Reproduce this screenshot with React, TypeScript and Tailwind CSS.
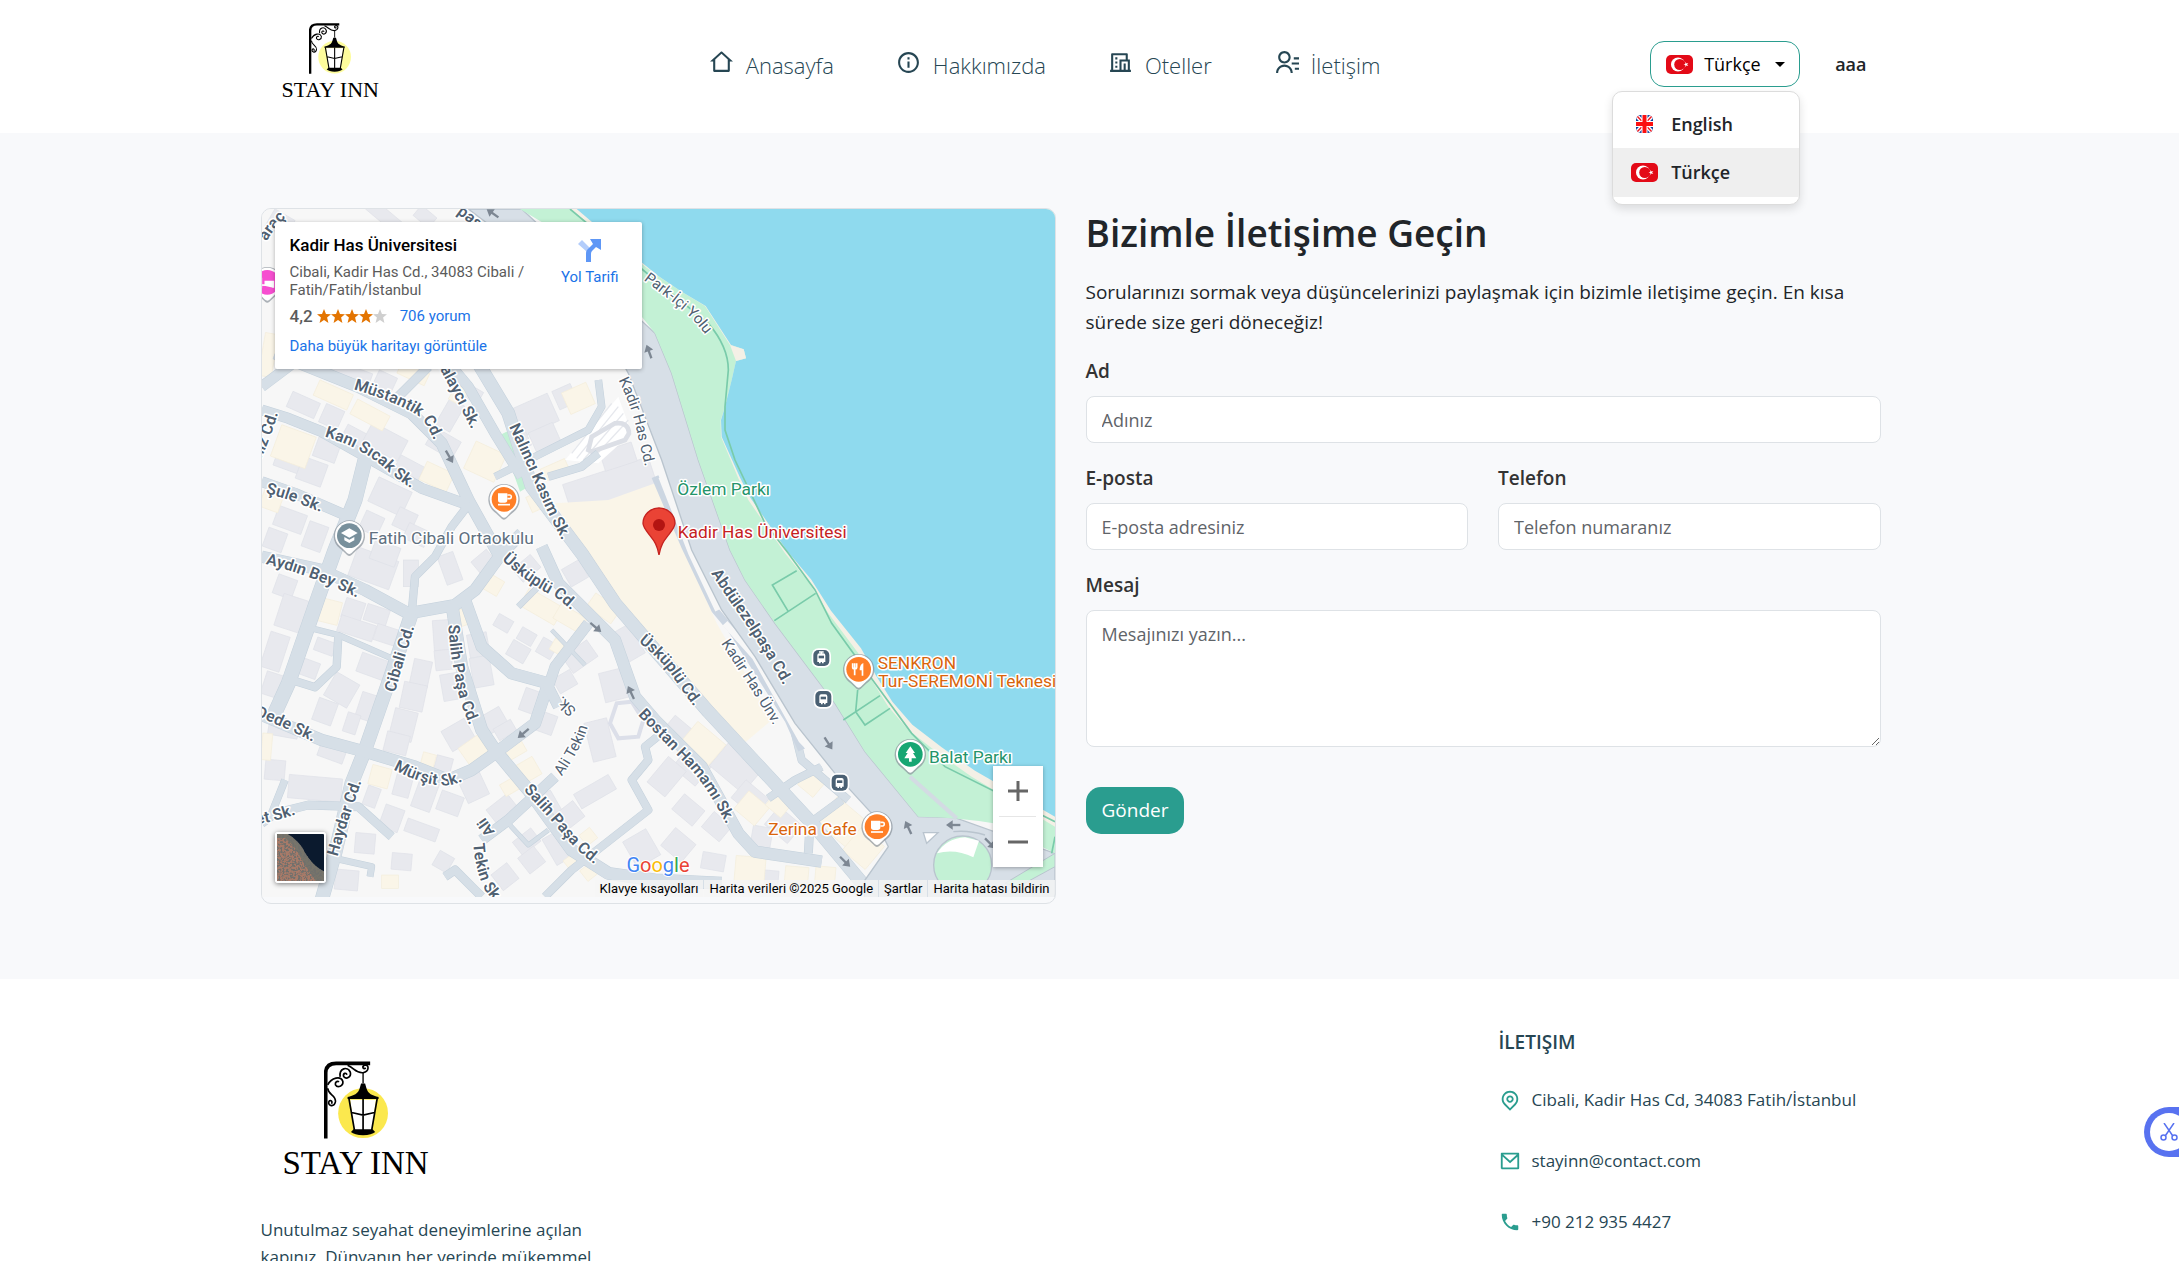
import React from "react";
import {
  RiHome2Line,
  RiInformationLine,
  RiHotelLine,
  RiContactsLine,
  RiMapPinLine,
  RiMailLine,
} from "react-icons/ri";
import { MdPhone } from "react-icons/md";

/* ---------- Brand ---------- */

function Lamp({ className, glow }: { className: string; glow: string }) {
  return (
    <svg viewBox="0 0 190 230" className={className} fill="none" aria-hidden="true">
      <circle cx="116" cy="154" r="74" fill={glow} />
      <path d="M5 229V34Q6 6 36 6H137" stroke="#000" strokeWidth="11" />
      <path
        d="M11 70C22 48 50 42 56 60C58 74 40 80 34 70C32 62 40 56 44 62M48 46C44 20 70 14 78 32C82 48 64 56 58 44C56 36 66 32 68 40M70 12C90 20 94 36 116 34C136 30 134 8 120 12C112 16 116 26 124 20M11 80C12 100 36 100 34 120C30 138 12 132 14 122C16 112 28 118 22 126"
        stroke="#000"
        strokeWidth="5"
      />
      <path d="M116 34V66" stroke="#000" strokeWidth="4" />
      <path d="M110 66h12l4 14c4 16 18 22 36 26v6H70v-6c18-4 32-10 36-26z" fill="#000" />
      <path d="M78 114h76l-12 92H90z" fill="#fff" />
      <path d="M74 110l17 98M158 110l-17 98M116 110v98M82 152l34 8 34-8" stroke="#000" strokeWidth="5" />
      <path d="M88 202h56l8 8q-10 8-36 10q-26-2-36-10z" fill="#000" />
    </svg>
  );
}

/* ---------- Flags ---------- */

function TurkishFlag() {
  return (
    <svg viewBox="0 0 27 19" className="h-[19px] w-[27px] shrink-0" aria-hidden="true">
      <rect width="27" height="19" rx="5" fill="#e30a17" />
      <circle cx="12" cy="9.5" r="7" fill="#fff" />
      <circle cx="13.800" cy="9.500" r="5.600" fill="#e30a17" />
      <path d="M17.500 9.500l4.800-1.600-3 4.100v-5l3 4.100z" fill="#fff" />
    </svg>
  );
}

function BritishFlag() {
  return (
    <svg viewBox="0 0 17 18" className="h-[18px] w-[17px] shrink-0" aria-hidden="true">
      <clipPath id="gb">
        <rect width="17" height="18" rx="5" />
      </clipPath>
      <g clipPath="url(#gb)">
        <rect width="17" height="18" fill="#0b3d9c" />
        <path d="M0 0l17 18M17 0L0 18" stroke="#fff" strokeWidth="4" />
        <path d="M0 0l17 18M17 0L0 18" stroke="#f01c24" strokeWidth="1.500" />
        <path d="M8.500 0v18M0 9h17" stroke="#fff" strokeWidth="6" />
        <path d="M8.500 0v18M0 9h17" stroke="#fb1010" strokeWidth="4" />
      </g>
    </svg>
  );
}

/* ---------- Header ---------- */

const NAV = [
  { label: "Anasayfa", Icon: RiHome2Line },
  { label: "Hakkımızda", Icon: RiInformationLine },
  { label: "Oteller", Icon: RiHotelLine },
  { label: "İletişim", Icon: RiContactsLine },
];

function Header() {
  return (
    <header className="relative z-10 bg-white pr-[38px]">
      <div className="mx-auto flex h-[133px] max-w-[1620px] items-center justify-between">
        <a href="#" className="mr-[60px] flex flex-col items-center pb-2 pl-[21px]">
          <Lamp className="h-[51px] w-[42px]" glow="#fdfc9c" />
          <span className="mt-1 font-['Liberation_Serif',serif] text-[22px] leading-6 text-black">STAY INN</span>
        </a>
        <nav className="flex gap-[62px] pb-1">
          {NAV.map(({ label, Icon }) => (
            <a key={label} href="#" className="flex items-center gap-3 text-[#264653]">
              <Icon className="mb-1 size-[25px]" />
              <span className="font-['Open_Sans',sans-serif] text-[22px] leading-8 font-light">{label}</span>
            </a>
          ))}
        </nav>
        <div className="flex items-center gap-[35px] pr-[14px] pb-[5px]">
          <div className="relative">
            <button
              type="button"
              className="flex h-[46px] w-[150px] items-center rounded-[14px] border border-[#2a9d8f] bg-white pl-[15px] text-[18px] text-black"
            >
              <TurkishFlag />
              <span className="ml-[11px]">Türkçe</span>
              <svg viewBox="0 0 10 5" className="ml-[14px] h-[5px] w-[10px]" aria-hidden="true">
                <path d="M0 0h10L5 5z" fill="#000" />
              </svg>
            </button>
            <ul className="absolute top-full right-0 mt-[4px] w-[188px] rounded-[10px] border border-[#dcdcdc] bg-white pt-2 pb-[7px] text-[18px] font-semibold text-[#212529] shadow-[0_4px_10px_rgba(0,0,0,0.12)]">
              <li>
                <button type="button" className="flex h-12 w-full items-center pl-[18px]">
                  <span className="flex w-[27px] justify-center">
                    <BritishFlag />
                  </span>
                  <span className="ml-[13px]">English</span>
                </button>
              </li>
              <li>
                <button type="button" className="flex h-[49px] w-full items-center bg-[#efefef] pl-[18px]">
                  <TurkishFlag />
                  <span className="ml-[13px]">Türkçe</span>
                </button>
              </li>
            </ul>
          </div>
          <a href="#" className="text-[18px] font-semibold text-[#212529]">
            aaa
          </a>
        </div>
      </div>
    </header>
  );
}

/* ---------- Map ---------- */

// Minor streets: [path, width]
const STREETS: [string, number][] = [
  ["M640 440L760 640L830 860L980 1060L1080 1210L1200 1350L1360 1535L1680 1880L1830 2060", 38],
  ["M540 440L640 560L720 700L800 830", 30],
  ["M60 460L310 560L470 640L560 730L640 900L740 1080", 34],
  ["M20 630L100 655L200 695L350 780L500 865L640 915", 30],
  ["M20 560L140 470", 30],
  ["M420 600L520 500", 26],
  ["M330 780L300 900L240 1050L190 1190L100 1450L50 1560", 42],
  ["M20 845L120 880L270 945", 30],
  ["M20 1070L200 1110L330 1170L460 1240L600 1215L660 1170L740 1060L800 1000", 34],
  ["M470 1240L410 1420L330 1650L290 1750L240 1960L200 2100", 40],
  ["M470 1240L480 1130L540 1070L590 980L640 915", 22],
  ["M590 1210L620 1400L680 1590L720 1650L820 1770L950 1950L1060 2020L1200 2040L1400 2050", 36],
  ["M630 1200L680 1340L770 1420L880 1450L840 1570L720 1660L650 1710L580 1740L480 1700L330 1655L200 1620L20 1545", 34],
  ["M860 1040L910 1150L1000 1240L1080 1320L1140 1490L1200 1560L1340 1700L1450 1900L1500 1955L1700 1985", 34],
  ["M1000 1270L900 1400L880 1460L910 1520", 30],
  ["M170 1285L250 1305L410 1375", 16],
  ["M250 1305L245 1400L180 1462L110 1440", 22],
  ["M20 1870L60 1840L160 1815L310 1820L410 1910", 24],
  ["M90 1740L50 1840", 20],
  ["M680 1920L760 1860L900 1730", 30],
  ["M760 1870L820 1935L880 1890", 12],
  ["M240 1975L350 2000L345 2030", 18],
  ["M570 2030L600 2010L680 2090", 24],
  ["M870 2090L950 2010L1180 1830L1130 1740L1180 1680L1170 1640L1220 1600", 22],
  ["M720 830L900 740L1000 690L1040 620L1030 540", 20],
  ["M880 830L980 800L1030 760", 22],
  ["M1540 1795L1620 1740L1700 1700M1620 1600L1640 1680L1780 1800", 22],
  ["M1660 1960L1665 1870L1760 1800", 24],
  ["M790 1220L860 1150", 16],
  ["M890 1290L990 1395", 10],
];

// Building footprints: [x, y, width, height, rotation]
const BUILDINGS: [number, number, number, number, number][] = [
  [100, 590, 90, 50, 24], [200, 620, 60, 60, 24], [40, 40, 70, 60, 30], [330, 30, 120, 40, 40], [480, 30, 60, 40, 40],
  [260, 690, 90, 60, 28], [330, 690, 120, 70, 28], [420, 780, 80, 60, 28], [230, 500, 120, 40, 20], [360, 520, 60, 50, 25],
  [620, 560, 60, 40, 30], [560, 600, 50, 90, 30], [520, 700, 90, 60, 30], [180, 720, 70, 60, 20], [60, 760, 80, 50, 20],
  [350, 850, 110, 80, 25], [320, 940, 60, 60, 25], [420, 930, 60, 60, 25], [130, 780, 80, 70, 20], [60, 930, 90, 60, 20],
  [150, 970, 60, 80, 20], [30, 990, 60, 60, 20], [450, 980, 70, 50, 25], [780, 600, 120, 90, -24], [830, 680, 80, 70, -24],
  [760, 690, 60, 60, -24], [930, 810, 270, 90, -18], [1040, 740, 100, 60, -18], [900, 560, 60, 60, -24],
  [290, 1060, 130, 90, 20], [445, 1080, 45, 80, 0], [350, 1030, 80, 60, 20], [560, 1060, 50, 90, -20],
  [60, 1130, 60, 60, 20], [70, 1190, 80, 100, 18], [30, 1300, 60, 110, 18], [25, 1420, 60, 70, 18],
  [265, 1200, 60, 60, 18], [330, 1220, 70, 50, 18], [250, 1260, 110, 50, 18], [360, 1280, 70, 50, 18], [180, 1320, 60, 40, 20],
  [130, 1380, 60, 50, 20], [310, 1370, 90, 60, 20], [220, 1430, 80, 80, 30], [180, 1500, 60, 70, 20], [310, 1480, 50, 80, 18],
  [270, 1540, 40, 60, 18], [470, 1380, 55, 80, 12], [440, 1450, 70, 80, 12], [410, 1530, 70, 90, 14], [390, 1600, 70, 60, 14],
  [535, 1260, 60, 90, -4], [540, 1350, 50, 60, -6], [560, 1420, 60, 80, -10], [640, 1300, 60, 70, -10], [650, 1370, 60, 90, -10],
  [570, 1570, 80, 70, -30], [690, 1530, 60, 60, -30], [720, 1570, 60, 40, -30], [720, 1250, 50, 40, 30], [790, 1290, 50, 40, 30],
  [760, 1330, 60, 50, 30], [850, 1320, 50, 50, 30], [800, 1470, 60, 70, 20], [850, 1540, 50, 60, 20], [930, 1340, 90, 60, -35],
  [1090, 1280, 60, 100, -30], [1040, 1410, 80, 90, -14], [900, 1420, 60, 50, -30], [1000, 1560, 70, 120, -14], [960, 1750, 120, 50, -30],
  [1070, 1150, 50, 30, -10], [40, 1570, 90, 40, 10], [30, 1680, 60, 60, 5], [100, 1730, 160, 70, 5], [190, 1640, 80, 40, 20],
  [420, 1710, 50, 80, 15], [480, 1740, 60, 90, 20], [550, 1780, 70, 60, 20], [620, 1720, 70, 80, -25], [540, 1670, 50, 50, 15],
  [330, 1760, 40, 60, 20], [380, 1820, 60, 70, 20], [450, 1870, 100, 40, 20], [300, 1900, 60, 60, 5], [410, 1960, 60, 50, 5],
  [240, 2010, 70, 60, 5], [540, 1960, 50, 50, 30], [700, 1800, 80, 50, -38], [780, 1900, 70, 50, -38], [850, 1780, 60, 80, -30],
  [900, 1820, 80, 60, -38], [720, 2000, 60, 60, -38], [800, 1950, 60, 60, -38], [880, 1900, 50, 90, -30], [1120, 1900, 80, 90, -30],
  [1230, 1560, 70, 70, 40], [1270, 1650, 90, 90, 40], [1380, 1650, 130, 100, 40], [1200, 1680, 70, 100, 40], [1260, 1800, 80, 60, 40],
  [1350, 1850, 70, 60, 40], [1440, 1760, 90, 70, 40], [1230, 1900, 80, 70, 40], [1540, 1840, 90, 70, 40], [1340, 1960, 70, 50, 10],
  [1490, 2010, 80, 50, 5], [1490, 1880, 60, 60, 10], [930, 1090, 60, 60, -30], [780, 1080, 70, 50, -40], [660, 1060, 60, 60, -40],
];

const SHOPS: [number, number, number, number, number][] = [
  [180, 560, 110, 50, 24], [20, 400, 40, 130, 10], [290, 620, 110, 50, 28], [60, 690, 110, 100, 20], [500, 800, 90, 60, 25],
  [640, 740, 100, 90, 25], [590, 560, 40, 50, 30], [20, 870, 60, 60, 20], [930, 560, 80, 70, -24], [860, 790, 80, 40, -24],
  [820, 880, 50, 50, -24], [195, 1200, 60, 70, 14], [690, 1130, 50, 50, 30], [600, 1230, 30, 50, -20], [800, 1190, 120, 60, 30],
  [900, 1230, 90, 50, 30], [1000, 1200, 90, 50, 35], [890, 1320, 40, 40, 30], [620, 1620, 70, 60, -35], [750, 1630, 60, 40, -30],
  [790, 1680, 60, 60, -30], [740, 1740, 50, 40, -30], [500, 1660, 40, 40, 15], [345, 1700, 60, 60, 15], [20, 1600, 30, 80, 5],
  [980, 1890, 40, 40, -38], [930, 1960, 60, 40, -38], [980, 1990, 60, 40, -38], [380, 2025, 50, 40, 0], [1290, 1590, 110, 80, 40],
  [1450, 1790, 80, 70, 40], [1640, 1720, 60, 60, 40], [1700, 1820, 130, 100, 40], [1540, 1790, 60, 50, 40], [1780, 1900, 90, 90, 40],
  [1440, 1970, 90, 80, 5], [1590, 2000, 70, 50, 5], [1680, 2000, 60, 70, 5], [430, 500, 90, 40, 25],
];

// Street names set along their streets: [path, name]
const NAMES: [string, string][] = [
  ["M295 568Q440 610 500 655Q530 690 555 775", "Müstantik Cd."],
  ["M208 710Q330 745 400 815Q450 855 530 905", "Kanı Sıcak Sk."],
  ["M32 880Q120 900 250 960", "Şule Sk."],
  ["M32 1092Q190 1130 380 1230", "Aydın Bey Sk."],
  ["M0 1548Q90 1580 230 1655", "Dede Sk."],
  ["M5 1872Q70 1865 170 1825", "et Sk."],
  ["M540 480Q600 590 640 670Q670 720 720 820", "Kalaycı Sk."],
  ["M762 680Q800 760 840 850Q880 950 970 1110", "Nalıncı Kasım Sk."],
  ["M740 1080Q830 1160 900 1190Q940 1220 1000 1280", "Üsküplü Cd."],
  ["M1150 1325Q1230 1390 1260 1440Q1300 1500 1370 1590", "Üsküplü Cd."],
  ["M1148 1545Q1250 1650 1310 1710Q1380 1790 1460 1970", "Bostan Hamamı Sk."],
  ["M1368 1120L1425 1205Q1510 1320 1605 1490L1650 1580", "Abdülezelpaşa Cd."],
  ["M580 1275Q585 1370 610 1480Q630 1560 690 1670", "Salih Paşa Cd."],
  ["M805 1770Q880 1850 930 1910Q970 1960 1080 2040", "Salih Paşa Cd."],
  ["M415 1708Q520 1765 590 1755Q640 1740 700 1715", "Mürşit Sk."],
  ["M420 1478Q445 1380 505 1200", "Cibali Cd."],
  ["M248 1970Q280 1850 350 1660", "Haydar Cd."],
  ["M5 800Q50 720 85 580", "eniz Cd."],
  ["M35 125Q70 60 150 10", "araç"],
  ["M655 1930Q660 2010 690 2070L760 2160", "Tekin Sk."],
  ["M605 40Q660 80 720 140", "paşa"],
];

const THIN_NAMES: [string, string][] = [
  ["M1090 540Q1130 620 1145 690Q1160 760 1190 880", "Kadir Has Cd."],
  ["M1165 240Q1260 310 1310 355Q1370 420 1400 480", "Park-İçi Yolu"],
  ["M1398 1330L1490 1470Q1540 1550 1575 1610L1610 1680", "Kadir Has Ünv."],
  ["M920 1730Q980 1640 995 1590Q1000 1550 985 1490", "Ali Tekin"],
];

const ARROWS: [number, number, number][] = [
  [583, 770, 60], [1022, 1282, 40], [805, 1600, 140], [1128, 1478, 245], [713, 40, 215], [1182, 455, 250],
  [1720, 1630, 57], [1960, 1883, -115], [2095, 1875, 180], [2205, 1930, 45], [1770, 1985, 45],
];

function Blocks({ items, fill, stroke }: { items: [number, number, number, number, number][]; fill: string; stroke: string }) {
  return (
    <g fill={fill} stroke={stroke} strokeWidth="2">
      {items.map(([x, y, w, h, r], i) => (
        <rect key={i} x={x} y={y} width={w} height={h} transform={`rotate(${r} ${x + w / 2} ${y + h / 2})`} />
      ))}
    </g>
  );
}

function Pin({ x, y, color, children }: { x: number; y: number; color: string; children: React.ReactNode }) {
  return (
    <g transform={`translate(${x} ${y})`}>
      <path
        d="M0 61C-8 61 -12 50 -29 38A47 47 0 1 1 29 38C12 50 8 61 0 61Z"
        fill="#8a939b"
        opacity="0.700"
      />
      <path d="M0 55C-8 55 -12 44 -28 32A43 43 0 1 1 28 32C12 44 8 55 0 55Z" fill="#fff" />
      <circle r="37" fill={color} />
      {children}
    </g>
  );
}

function Cup() {
  return (
    <g>
      <path d="M-18 -18h28v20q0 8-8 8h-12q-8 0-8-8z" fill="#fff" />
      <path d="M10-13h8q4 0 4 5t-4 6h-8" fill="none" stroke="#fff" strokeWidth="5" />
      <path d="M-18 16h36" stroke="#fff" strokeWidth="5" />
    </g>
  );
}

function Stop({ x, y, tram }: { x: number; y: number; tram?: boolean }) {
  return (
    <g transform={`translate(${x} ${y})`}>
      <rect x="-29" y="-29" width="58" height="58" rx="20" fill="#fff" />
      <rect x="-24" y="-24" width="48" height="48" rx="15" fill="#4a6073" />
      <path d="M-12-8q0-6 6-6h12q6 0 6 6v20h-5v4h-5v-4h-4v4h-5v-4h-5z" fill="#fff" />
      <path d="M-8-7h16v8h-16z" fill="#4a6073" />
      {tram && <path d="M-7-18h14M0-18v6" stroke="#fff" strokeWidth="4" />}
    </g>
  );
}

function MapDrawing() {
  return (
    <svg
      viewBox="21 27 2379 2064"
      preserveAspectRatio="xMidYMid slice"
      className="block size-full font-[Roboto,sans-serif]"
      role="img"
      aria-label="Kadir Has Üniversitesi haritası"
    >
      <rect x="-400" y="-400" width="3400" height="3000" fill="#f7f7f7" />
      <Blocks items={BUILDINGS} fill="#e8e9ee" stroke="#dfe1e8" />
      <Blocks items={SHOPS} fill="#faf5e8" stroke="#f4eddb" />
      <path d="M900 910L1060 900L1200 850L1250 960L1385 1270L1550 1560L1455 1640L1200 1360L1060 1180L985 1050Z" fill="#faf5e8" />
      <path d="M930 780L1090 590L1130 700L1030 790Z" fill="#fff" />
      <path d="M950 760L1070 610M965 775L1090 620M985 780L1105 640M1005 785L1120 660" stroke="#e6e8ed" strokeWidth="4" />
      <path d="M1000 750L1010 710L1080 670Q1120 665 1122 700L1110 720L1010 755Z" fill="none" stroke="#dcdfe6" strokeWidth="14" />
      <path d="M1065 1570L1085 1510L1130 1505L1165 1560L1150 1610L1090 1615Z" fill="none" stroke="#dcdfe9" strokeWidth="12" />
      <path d="M735 705L765 690L820 860L795 875Z" fill="#c3f1d5" />
      <g fill="none" strokeLinejoin="round">
        {STREETS.map(([d, w], i) => (
          <path key={i} d={d} stroke="#c4d1dc" strokeWidth={w + 3} />
        ))}
        {STREETS.map(([d, w], i) => (
          <path key={i} d={d} stroke="#d6dfe7" strokeWidth={w} />
        ))}
      </g>
      {/* campus road and coastal highway */}
      <path d="M1200 830L1290 1040L1380 1230L1430 1290L1600 1560L1640 1650" fill="none" stroke="#ccd6e2" strokeWidth="22" />
      <path d="M1220 830L1310 1060L1390 1230M1410 1270L1500 1370L1640 1620L1850 1840" fill="none" stroke="#f7f7f7" strokeWidth="20" />
      <path
        d="M640 27L800 27L1200 400L1250 520L1330 780L1425 1050L1470 1140L1560 1270L1740 1510L1830 1655L1990 1850L2100 1853L2400 1960V2600H1810L1830 2040L1900 1940L1850 1840L1740 1720L1620 1570L1500 1370L1400 1230L1310 1050L1220 780L1120 520L1000 300Z"
        fill="#d7dfe7"
        stroke="#b9c4ce"
        strokeWidth="4"
      />
      {/* shore */}
      <path
        d="M950 -400H3000V2600H2400V1960L2215 1870Q2100 1850 1990 1850L1830 1655L1740 1510L1560 1270L1470 1140L1425 1050L1330 780L1250 520L1200 400L1000 150L795 27V-400Z"
        fill="#c3f1d5"
      />
      <path
        d="M945 -400V27L1000 70L1200 222L1280 275L1350 318L1425 435L1465 448L1473 475L1443 483L1430 540L1410 620L1397 660L1398 710L1450 835L1480 900L1590 1060L1660 1145L1720 1240L1810 1360L1850 1440L1900 1520L1960 1590L2050 1660L2150 1730L2400 1880H3000V-400Z"
        fill="#f4f0e6"
      />
      <path
        d="M965 -400V27L1010 65L1210 228L1280 275L1352 318L1428 435L1466 448L1473 475L1443 483L1430 540L1410 620L1398 660L1400 710L1456 835L1486 893L1596 1052L1668 1138L1728 1232L1818 1345L1862 1425L1912 1505L1972 1574L2060 1642L2160 1712L2400 1850H3000V-400Z"
        fill="#8fdaee"
      />
      <path d="M1425 435L1466 448L1473 475L1443 483Z" fill="#f4f0e6" />
      <g fill="none" stroke="#79cbaa" strokeWidth="5">
        <path d="M945 27L1200 240L1360 370Q1420 440 1420 510L1410 620L1410 690L1440 780L1530 970L1600 1060L1680 1170L1730 1270L1860 1450L1970 1600L2070 1700L2400 1865" />
        <path d="M1625 1112L1552 1155L1600 1235M1558 1262L1682 1180M1765 1560L1875 1487M1808 1470L1802 1535L1830 1575L1905 1525" />
        <path d="M2400 1910L2390 1960" />
      </g>
      <path d="M1965 1730L2105 1855" stroke="#d3dbe3" strokeWidth="12" />
      <path d="M2005 1898h44l-34 32z" fill="#fff" stroke="#b9c4ce" strokeWidth="4" />
      <circle cx="2123" cy="1995" r="87" fill="#c3f1d5" stroke="#b9c4ce" strokeWidth="4" />
      <path d="M2046 1960Q2075 1915 2130 1912L2172 1922L2155 1972Q2100 1945 2046 1960Z" fill="#fff" />
      <path d="M2095 1895Q2140 1890 2190 1905" fill="none" stroke="#b9c4ce" strokeWidth="4" />
      <path d="M2250 2050L2400 1960V2000L2290 2060Z" fill="#c3f1d5" stroke="#b9c4ce" strokeWidth="3" />

      <g fill="none" stroke="#7d8793" strokeWidth="7">
        {ARROWS.map(([x, y, r], i) => (
          <g key={i} transform={`translate(${x} ${y}) rotate(${r})`}>
            <path d="M-21 0H8" />
            <path d="M2 -14L22 0L2 14Z" fill="#7d8793" stroke="none" />
          </g>
        ))}
      </g>

      <defs>
        {NAMES.map(([d], i) => (
          <path key={i} id={`street-${i}`} d={d} />
        ))}
        {THIN_NAMES.map(([d], i) => (
          <path key={i} id={`lane-${i}`} d={d} />
        ))}
      </defs>
      <g fill="#4f6071" stroke="#fff" strokeWidth="9" strokeLinejoin="round" paintOrder="stroke" fontSize="48">
        <g fontWeight="600">
          {NAMES.map(([, name], i) => (
            <text key={i}>
              <textPath href={`#street-${i}`}>{name}</textPath>
            </text>
          ))}
        </g>
        <g fontSize="45">
          {THIN_NAMES.map(([, name], i) => (
            <text key={i}>
              <textPath href={`#lane-${i}`}>{name}</textPath>
            </text>
          ))}
          <text transform="translate(965 1530) rotate(225)">Sk.</text>
          <text fontWeight="600" transform="translate(720 1895) rotate(235)">Ali</text>
        </g>
      </g>

      <Pin x={37} y={247} color="#f64fd0">
        <path d="M-18-14v30M-18 8h36v8M-6-2h24v8H-6z" stroke="#fff" strokeWidth="5" fill="#fff" />
      </Pin>
      <Pin x={747} y={898} color="#ff7f27">
        <Cup />
      </Pin>
      <Pin x={283} y={1007} color="#78909c">
        <path d="M-25-8L0-22L25-8L0 6ZM-15 4V14L0 22L15 14V4L0 12Z" fill="#fff" />
      </Pin>
      <Pin x={1866} y={1880} color="#ff7f27">
        <Cup />
      </Pin>
      <Pin x={1811} y={1408} color="#ff7f27">
        <path d="M-12-18v36M-18-18v12q0 5 6 5t6-5v-12" stroke="#fff" strokeWidth="5" fill="none" />
        <path d="M14 19v-38q-11 4-11 22h6v16z" fill="#fff" />
      </Pin>
      <Pin x={1966} y={1663} color="#17a673">
        <path d="M0-24L14-4H8L18 12H4v10h-8V12H-18L-8-4H-14Z" fill="#fff" />
      </Pin>
      <Stop x={1699} y={1374} tram />
      <Stop x={1705} y={1497} />
      <Stop x={1754} y={1748} />

      <path
        d="M1212 1065C1206 1030 1195 1020 1182 1003C1170 988 1164 978 1164 970A48 46 0 0 1 1260 970C1260 978 1254 988 1242 1003C1229 1020 1218 1030 1212 1065Z"
        fill="#ea4335"
        stroke="#c5221f"
        strokeWidth="4"
      />
      <circle cx="1212" cy="975" r="18" fill="#b31412" />

      <g stroke="#fff" strokeWidth="9" strokeLinejoin="round" paintOrder="stroke" fontSize="52">
        <text x="1267" y="886" fill="#23946a">
          Özlem Parkı
        </text>
        <text x="1268" y="1015" fill="#c5221f">
          Kadir Has Üniversitesi
        </text>
        <text x="1868" y="1407" fill="#d9640b">
          SENKRON
        </text>
        <text x="1870" y="1460" fill="#d9640b">
          Tur-SEREMONİ Teknesi
        </text>
        <text x="2022" y="1690" fill="#23946a">
          Balat Parkı
        </text>
        <text x="1540" y="1905" fill="#d9640b">
          Zerina Cafe
        </text>
        <text x="341" y="1032" fill="#607080">
          Fatih Cibali Ortaokulu
        </text>
      </g>
    </svg>
  );
}

function SatelliteThumb() {
  return (
    <svg viewBox="0 0 48 48" className="size-full" aria-hidden="true">
      <filter id="roofs" x="0" y="0" width="100%" height="100%">
        <feTurbulence type="fractalNoise" baseFrequency="0.500" numOctaves="2" seed="4" />
        <feColorMatrix values="0 0 0 0 0.160  0 0 0 0 0.160  0 0 0 0 0.150  6 0 0 0 -2.700" />
        <feComposite operator="in" in2="SourceGraphic" />
      </filter>
      <rect width="48" height="48" fill="#0b1a2e" />
      <path d="M0 0H11Q24 8 29 20Q38 34 48 38V48H0Z" fill="#77746a" />
      <path d="M0 4H8Q20 14 24 24Q32 38 40 48H0Z" fill="#a87a68" />
      <path d="M0 0H11Q24 8 29 20Q38 34 48 38V48H0Z" filter="url(#roofs)" />
    </svg>
  );
}

const GOOGLE: [string, string][] = [
  ["G", "text-[#4285f4]"],
  ["o", "text-[#ea4335]"],
  ["o", "text-[#fbbc05]"],
  ["g", "text-[#4285f4]"],
  ["l", "text-[#34a853]"],
  ["e", "text-[#ea4335]"],
];

function Star({ color }: { color: string }) {
  return (
    <svg viewBox="0 0 24 24" className="size-[14px]" fill={color} aria-hidden="true">
      <path d="M12 0l3.400 8.600 8.600.4-6.700 5.700L19.600 24 12 18.700 4.400 24l2.300-9.300L0 9l8.600-.4z" />
    </svg>
  );
}

function MapPanel() {
  return (
    <div className="overflow-hidden rounded-[10px] border border-[#dee2e6] pb-[6px] font-[Roboto,sans-serif]">
      <div className="relative h-[688px] overflow-hidden">
        <MapDrawing />

        <div className="absolute top-[13px] left-[13px] flex h-[147px] w-[367px] justify-between rounded-[2px] bg-white pt-3 pr-[23px] pl-[15px] shadow-[0_1px_4px_rgba(0,0,0,0.300)]">
          <div className="text-[15px] text-[#5b5b5b]">
            <h3 className="text-[17px] leading-[22px] font-medium text-black">Kadir Has Üniversitesi</h3>
            <p className="mt-[7px] leading-[18px]">
              Cibali, Kadir Has Cd., 34083 Cibali /<br />
              Fatih/Fatih/İstanbul
            </p>
            <div className="mt-[7px] flex items-center leading-5">
              <span className="mr-1 text-[17px] font-medium">4,2</span>
              {["#e37400", "#e37400", "#e37400", "#e37400", "#cfcfcf"].map((color, i) => (
                <Star key={i} color={color} />
              ))}
              <a href="#" className="ml-[13px] text-[#1a73e8]">
                706 yorum
              </a>
            </div>
            <a href="#" className="mt-[10px] block leading-5 text-[#1a73e8]">
              Daha büyük haritayı görüntüle
            </a>
          </div>
          <a href="#" className="mt-[5px] flex flex-col items-center self-start text-[15px] leading-5 text-[#1a73e8]">
            <svg viewBox="0 0 23 23" className="size-[23px]" aria-hidden="true">
              <path d="M4 1L0 5L8 12V16H13V10Z" fill="#b3cdfb" />
              <path d="M8 23V15Q8 11 11 9L15 5L12 0H23V11L18 8L14 12Q13 13 13 15V23Z" fill="#5e97f6" />
            </svg>
            <span className="mt-[5px]">Yol Tarifi</span>
          </a>
        </div>

        <button
          type="button"
          aria-label="Uydu görüntüsü"
          className="absolute bottom-[14px] left-[13px] size-[51px] overflow-hidden rounded-[3px] border-2 border-white shadow-[0_1px_5px_rgba(0,0,0,0.500)]"
        >
          <SatelliteThumb />
        </button>

        <div className="absolute right-3 bottom-[30px] flex w-[50px] flex-col items-center bg-white text-[#666] shadow-[0_1px_4px_rgba(0,0,0,0.300)]">
          <button type="button" aria-label="Yakınlaştır" className="flex h-[50px] w-full items-center justify-center">
            <svg viewBox="0 0 20 20" className="size-5" aria-hidden="true">
              <path d="M0 10h20M10 0v20" stroke="#666" strokeWidth="3" />
            </svg>
          </button>
          <div className="h-px w-[37px] bg-[#e6e6e6]" />
          <button type="button" aria-label="Uzaklaştır" className="flex h-[50px] w-full items-center justify-center">
            <svg viewBox="0 0 20 20" className="size-5" aria-hidden="true">
              <path d="M0 10h20" stroke="#666" strokeWidth="3" />
            </svg>
          </button>
        </div>

        <div className="absolute inset-x-0 bottom-[18px] text-center">
          <span className="font-[Roboto,sans-serif] text-[20px] leading-7 [paint-order:stroke] [-webkit-text-stroke:2px_white]">
            {GOOGLE.map(([letter, color], i) => (
              <span key={i} className={color}>
                {letter}
              </span>
            ))}
          </span>
        </div>
        <div className="absolute right-0 bottom-0 flex h-[17px] items-center gap-px text-[13px] leading-[17px] text-black">
          <button type="button" className="bg-[#f5f5f5]/80 px-[5px]">Klavye kısayolları</button>
          <span className="bg-[#f5f5f5]/80 px-[5px]">Harita verileri ©2025 Google</span>
          <a href="#" className="bg-[#f5f5f5]/80 px-[5px]">Şartlar</a>
          <a href="#" className="bg-[#f5f5f5]/80 px-[5px]">Harita hatası bildirin</a>
        </div>
      </div>
    </div>
  );
}

/* ---------- Form ---------- */

const FIELD =
  "mt-[10px] block h-[47px] w-full rounded-[8px] border border-[#dee2e6] bg-white px-[15px] text-[18px] text-[#212529] placeholder:text-[#5f6469]";

function Field({ id, label, placeholder, type = "text" }: { id: string; label: string; placeholder: string; type?: string }) {
  return (
    <div>
      <label htmlFor={id} className="block text-[19px] leading-[30px] font-semibold text-[#333]">
        {label}
      </label>
      <input id={id} type={type} placeholder={placeholder} className={FIELD} />
    </div>
  );
}

function ContactForm() {
  return (
    <div className="pt-px">
      <h2 className="text-[37px] leading-[48px] font-semibold text-[#212529]">Bizimle İletişime Geçin</h2>
      <p className="mt-5 text-[19px] leading-[30px] text-[#212529]">
        Sorularınızı sormak veya düşüncelerinizi paylaşmak için bizimle iletişime geçin. En kısa sürede size geri döneceğiz!
      </p>
      <form className="mt-[19px] flex flex-col gap-5">
        <Field id="name" label="Ad" placeholder="Adınız" />
        <div className="grid grid-cols-2 gap-[30px]">
          <Field id="email" type="email" label="E-posta" placeholder="E-posta adresiniz" />
          <Field id="phone" type="tel" label="Telefon" placeholder="Telefon numaranız" />
        </div>
        <div>
          <label htmlFor="message" className="block text-[19px] leading-[30px] font-semibold text-[#333]">
            Mesaj
          </label>
          <textarea
            id="message"
            placeholder="Mesajınızı yazın..."
            className="mt-[10px] block h-[137px] w-full resize-y rounded-[8px] border border-[#dee2e6] bg-white px-[15px] py-2 text-[18px] leading-[30px] text-[#212529] placeholder:text-[#5f6469]"
          />
        </div>
        <button
          type="button"
          className="mt-5 h-[47px] self-start rounded-[15px] bg-[#2a9d8f] px-4 text-[19px] font-medium text-white"
        >
          Gönder
        </button>
      </form>
    </div>
  );
}

/* ---------- Footer ---------- */

function Footer() {
  return (
    <footer className="bg-white pr-[38px] text-[#264653]">
      <div className="mx-auto flex max-w-[1620px] justify-between">
        <div className="pt-[82px]">
          <a href="#" className="ml-[22px] inline-flex flex-col items-center">
            <Lamp className="h-[78px] w-[64px]" glow="#fbe84e" />
            <span className="mt-[6px] font-['Liberation_Serif',serif] text-[33px] leading-9 text-black">STAY INN</span>
          </a>
          <p className="mt-[35px] w-[345px] text-[17px] leading-[27px]">
            Unutulmaz seyahat deneyimlerine açılan
            <br />
            kapınız. Dünyanın her yerinde mükemmel
          </p>
        </div>
        <div className="w-[382px] pt-[48px]">
          <h3 className="text-[19px] leading-[30px] font-semibold">İLETIŞIM</h3>
          <ul className="mt-7 flex flex-col gap-[31px] text-[17px] leading-[30px]">
            <li className="flex items-center gap-[11px]">
              <RiMapPinLine className="size-[22px] text-[#2a9d8f]" />
              Cibali, Kadir Has Cd, 34083 Fatih/İstanbul
            </li>
            <li className="flex items-center gap-[11px]">
              <RiMailLine className="size-[22px] text-[#2a9d8f]" />
              <a href="mailto:stayinn@contact.com">stayinn@contact.com</a>
            </li>
            <li className="flex items-center gap-[11px]">
              <MdPhone className="size-[22px] text-[#2a9d8f]" />
              <a href="tel:+902129354427">+90 212 935 4427</a>
            </li>
          </ul>
        </div>
      </div>
    </footer>
  );
}

export default function App() {
  return (
    <div className="min-h-screen bg-white font-['Open_Sans',sans-serif]">
      <Header />
      <main className="bg-[#f8f9fb] py-[75px] pr-[38px]">
        <div className="mx-auto grid max-w-[1620px] grid-cols-2 gap-[30px]">
          <MapPanel />
          <ContactForm />
        </div>
      </main>
      <Footer />
      <button
        type="button"
        aria-label="Ekran alıntısı"
        className="fixed right-0 bottom-[104px] flex h-[50px] w-[35px] items-center overflow-hidden rounded-l-full bg-[#5872f0] pl-[6px]"
      >
        <span className="flex size-[38px] shrink-0 items-center justify-center rounded-full bg-white">
          <svg viewBox="0 0 18 18" className="size-[18px]" fill="none" stroke="#5872f0" strokeWidth="1.500" aria-hidden="true">
            <path d="M4 0L12.500 12.500M14 0L5.500 12.500" />
            <circle cx="3.500" cy="14.500" r="2.500" />
            <circle cx="14.500" cy="14.500" r="2.500" />
          </svg>
        </span>
      </button>
    </div>
  );
}
